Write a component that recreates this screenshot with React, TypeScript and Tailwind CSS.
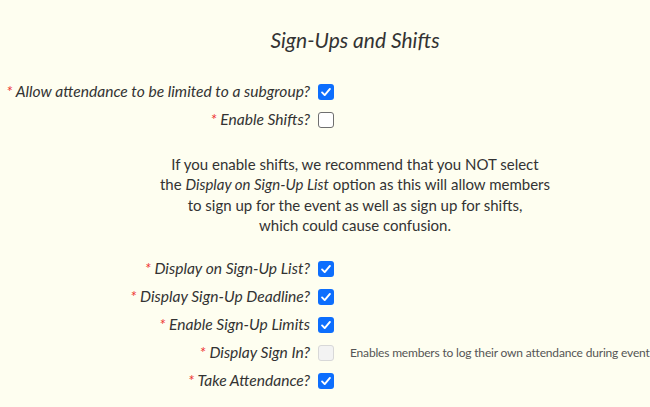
import React from "react";

type Row = {
  label: string;
  state: "on" | "off" | "disabled";
  help?: string;
};

const topRows: Row[] = [
  { label: "Allow attendance to be limited to a subgroup?", state: "on" },
  { label: "Enable Shifts?", state: "off" },
];

const bottomRows: Row[] = [
  { label: "Display on Sign-Up List?", state: "on" },
  { label: "Display Sign-Up Deadline?", state: "on" },
  { label: "Enable Sign-Up Limits", state: "on" },
  {
    label: "Display Sign In?",
    state: "disabled",
    help: "Enables members to log their own attendance during event",
  },
  { label: "Take Attendance?", state: "on" },
];

function Box({ state }: { state: Row["state"] }) {
  if (state === "on") {
    return (
      <span className="flex h-4 w-4 items-center justify-center rounded-[3px] bg-[#0d6efd]">
        <svg viewBox="0 0 16 16" className="h-3.5 w-3.5">
          <path d="M3.5 8.5l3 3 6-7" fill="none" stroke="#fff" strokeWidth="2.2" strokeLinecap="round" strokeLinejoin="round" />
        </svg>
      </span>
    );
  }
  if (state === "disabled") {
    return <span className="block h-4 w-4 rounded-[3px] border border-[#d8d8d8] bg-[#f3f3f3]" />;
  }
  return <span className="block h-4 w-4 rounded-[3px] border border-[#6f6f6f] bg-white" />;
}

function FieldRow({ row }: { row: Row }) {
  return (
    <div className="flex h-7 items-center">
      <div className="w-[310px] shrink-0 whitespace-nowrap text-right italic text-[15.6px] text-[#333]">
        <span className="text-[#e33]">* </span>
        {row.label}
      </div>
      <div className="ml-2 shrink-0">
        <Box state={row.state} />
      </div>
      {row.help && (
        <div className="ml-4 whitespace-nowrap text-[12px] tracking-[-0.18px] text-[#555]">{row.help}</div>
      )}
    </div>
  );
}

export default function App() {
  return (
    <div
      className="h-[407px] w-[650px] overflow-hidden bg-[#fefef0]"
      style={{ fontFamily: "Lato, 'Noto Sans', sans-serif" }}
    >
      <h2 className="pl-[60px] pt-[24px] text-center text-[21px] font-normal italic text-[#333]">
        Sign-Ups and Shifts
      </h2>
      <div className="mt-[22px]">
        {topRows.map((r) => (
          <FieldRow key={r.label} row={r} />
        ))}
      </div>
      <p className="mt-[20px] pl-[60px] text-center text-[15px] leading-[20.5px] text-[#333]">
        If you enable shifts, we recommend that you NOT select
        <br />
        the <em>Display on Sign-Up List</em> option as this will allow members
        <br />
        to sign up for the event as well as sign up for shifts,
        <br />
        which could cause confusion.
      </p>
      <div className="mt-[19px]">
        {bottomRows.map((r) => (
          <FieldRow key={r.label} row={r} />
        ))}
      </div>
    </div>
  );
}
